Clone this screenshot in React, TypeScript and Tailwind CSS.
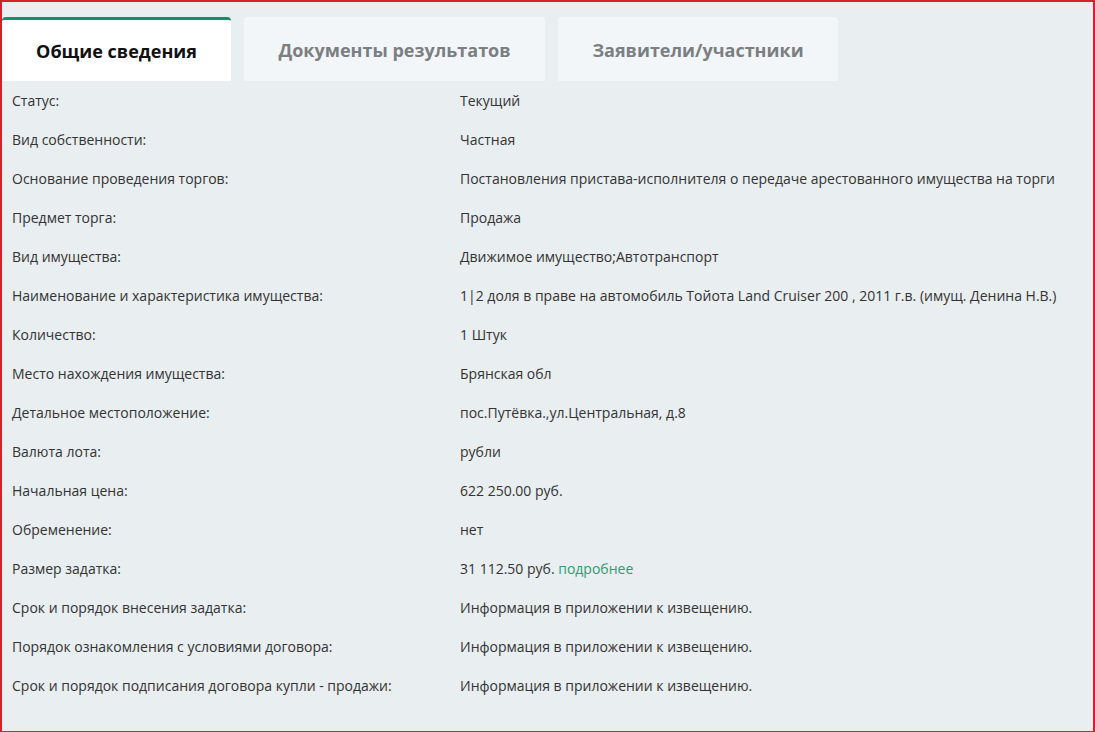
import React from 'react';

const rows: [string, React.ReactNode][] = [
  ['Статус:', 'Текущий'],
  ['Вид собственности:', 'Частная'],
  ['Основание проведения торгов:', 'Постановления пристава-исполнителя о передаче арестованного имущества на торги'],
  ['Предмет торга:', 'Продажа'],
  ['Вид имущества:', 'Движимое имущество;Автотранспорт'],
  ['Наименование и характеристика имущества:', '1|2 доля в праве на автомобиль Тойота Land Cruiser 200 , 2011 г.в. (имущ. Денина Н.В.)'],
  ['Количество:', '1 Штук'],
  ['Место нахождения имущества:', 'Брянская обл'],
  ['Детальное местоположение:', 'пос.Путёвка.,ул.Центральная, д.8'],
  ['Валюта лота:', 'рубли'],
  ['Начальная цена:', '622 250.00 руб.'],
  ['Обременение:', 'нет'],
  [
    'Размер задатка:',
    <>
      31 112.50 руб. <a className="text-[#2f9b72] cursor-pointer">подробнее</a>
    </>,
  ],
  ['Срок и порядок внесения задатка:', 'Информация в приложении к извещению.'],
  ['Порядок ознакомления с условиями договора:', 'Информация в приложении к извещению.'],
  ['Срок и порядок подписания договора купли - продажи:', 'Информация в приложении к извещению.'],
];

const tabs = ['Общие сведения', 'Документы результатов', 'Заявители/участники'];

export default function App() {
  return (
    <div
      className="h-[732px] w-full overflow-hidden bg-[#e9eef0] border-t-2 border-b border-l-2 border-r-2 border-[#d3232a] text-[#333] text-[14px]"
      style={{ fontFamily: '"Open Sans", "Liberation Sans", sans-serif' }}
    >
      <div className="flex gap-[13px] pt-[15px]">
        <div className="w-[229px] h-[64px] bg-white rounded-t-[4px] border-t-[3px] border-[#1f8a6a] flex items-center justify-center pt-[1px] font-bold text-[18px] text-[#111]">
          {tabs[0]}
        </div>
        <div className="w-[301px] h-[64px] bg-[#f3f6f8] rounded-t-[4px] flex items-center justify-center pt-[3px] font-bold text-[18px] text-[#7b7f82]">
          {tabs[1]}
        </div>
        <div className="w-[280px] h-[64px] bg-[#f3f6f8] rounded-t-[4px] flex items-center justify-center pt-[3px] font-bold text-[18px] text-[#7b7f82]">
          {tabs[2]}
        </div>
      </div>
      <div className="pl-[10px]">
        {rows.map(([label, value], i) => (
          <div key={i} className="flex items-center h-[39px]">
            <div className="w-[448px] shrink-0">{label}</div>
            <div className="whitespace-nowrap">{value}</div>
          </div>
        ))}
      </div>
    </div>
  );
}
